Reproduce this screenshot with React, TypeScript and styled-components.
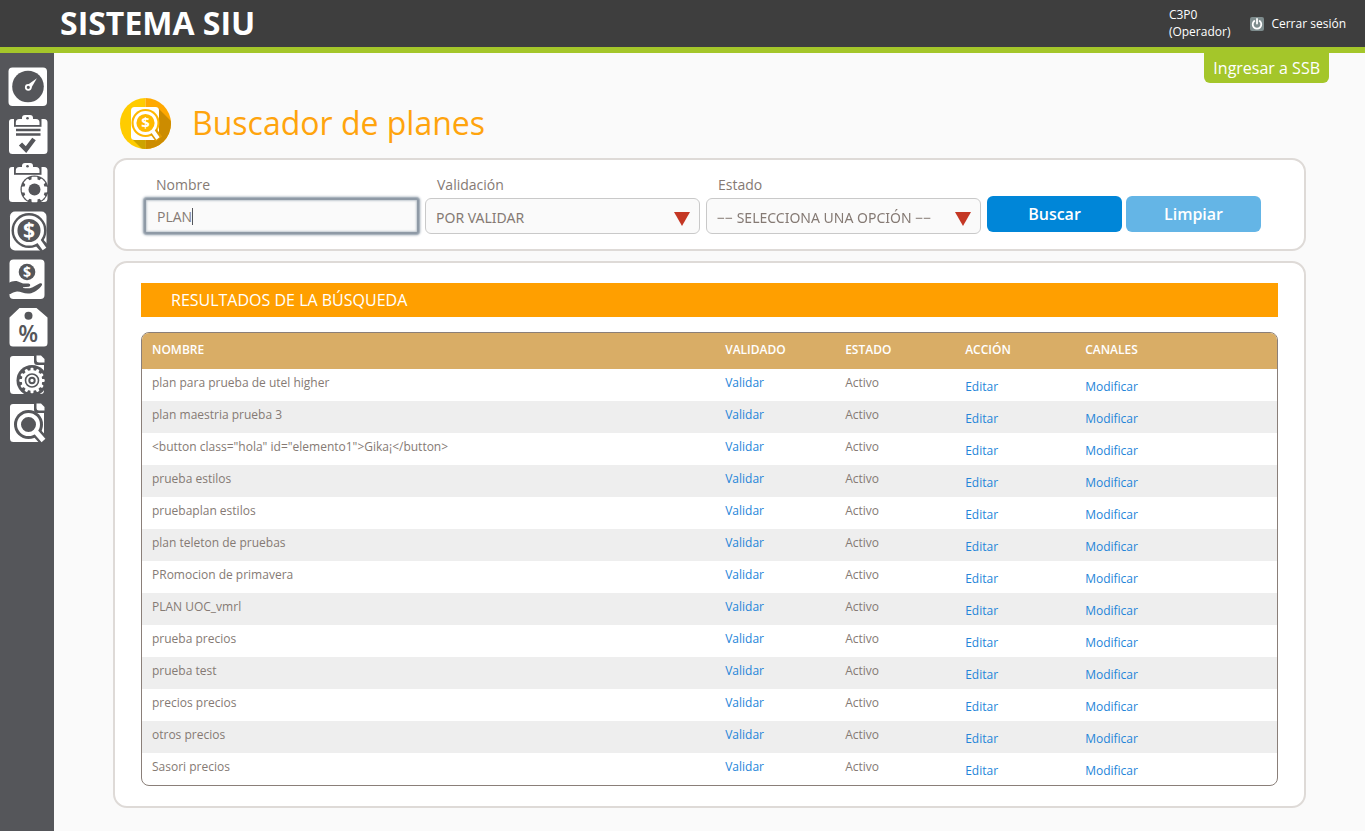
import React, { useState } from "react";
import styled, { createGlobalStyle } from "styled-components";

const GlobalStyle = createGlobalStyle`
  *, *::before, *::after { box-sizing: border-box; }
  html, body, #root { min-height: 100vh; }
  body {
    margin: 0;
    background: #fafafa;
    color: #857a74;
    font-family: "Open Sans", "Noto Sans", sans-serif;
    font-size: 12px;
    line-height: 18px;
  }
  button, input, select { font-family: inherit; }
`;

const Page = styled.div`
  display: flex;
  flex-direction: column;
  min-height: 100vh;
`;

const Header = styled.header`
  display: flex;
  align-items: center;
  justify-content: space-between;
  height: 53px;
  padding: 0 19px 0 60px;
  background: #3e3e3e;
  border-bottom: 6px solid #a4c62a;
  color: #fff;
`;

const Brand = styled.h1`
  margin: 0;
  padding-bottom: 2px;
  font-size: 32px;
  line-height: 44px;
  font-weight: 700;
`;

const Account = styled.div`
  display: flex;
  align-items: center;
  gap: 20px;
  font-weight: 500;
  line-height: 17px;
`;

const UserName = styled.div`
  display: flex;
  flex-direction: column;
  padding-bottom: 2px;
`;

const Logout = styled.a`
  display: flex;
  align-items: center;
  gap: 7px;
  color: #fff;
  text-decoration: none;
`;

const Body = styled.div`
  display: flex;
  flex: 1;
`;

const Sidebar = styled.nav`
  flex: 0 0 54px;
  display: flex;
  flex-direction: column;
  gap: 8px;
  padding: 14px 0 0 8px;
  background: #55565a;
`;

const SideLink = styled.a`
  display: block;
  height: 40px;
  svg { display: block; }
`;

const Main = styled.main`
  flex: 1;
  min-width: 0;
  display: flex;
  flex-direction: column;
  padding: 0 59px 22px;
`;

const SsbLink = styled.a`
  align-self: flex-end;
  margin-right: -23px;
  padding: 3px 9px;
  border-radius: 0 0 6px 6px;
  background: #a4c62a;
  color: #fff;
  font-size: 16px;
  line-height: 24px;
  font-weight: 500;
  text-decoration: none;
`;

const TitleRow = styled.div`
  display: flex;
  align-items: center;
  gap: 20px;
  padding: 14px 0 8px 6px;
`;

const Title = styled.h2`
  margin: 0;
  padding-bottom: 2px;
  color: #ffa40d;
  font-size: 32px;
  line-height: 50px;
  font-weight: 400;
`;

const Card = styled.section`
  border: 2px solid #dedad7;
  border-radius: 14px;
  background: #fff;
`;

const SearchCard = styled(Card)`
  margin-bottom: 10px;
  padding: 16px 29px 15px;
`;

const ResultsCard = styled(Card)`
  padding: 20px 26px;
`;

const SearchForm = styled.form`
  display: flex;
  flex-wrap: wrap;
  align-items: flex-end;
  gap: 6px;
`;

const Field = styled.div`
  flex: 0 1 275px;
  display: flex;
  flex-direction: column;
  gap: 4px;
`;

const Label = styled.label`
  padding-left: 12px;
  font-size: 14px;
  line-height: 18px;
`;

const InputBox = styled.div`
  position: relative;
`;

const Caret = styled.span`
  position: absolute;
  left: 48px;
  top: 10px;
  width: 1px;
  height: 17px;
  background: #55565a;
`;

const TextBox = styled.input<{ $ownCaret: boolean }>`
  display: block;
  width: 100%;
  height: 36px;
  padding: 0 11px;
  border: 1px solid #c9c9c9;
  border-radius: 6px;
  background: #fafafa;
  color: #857a74;
  caret-color: ${(p) => (p.$ownCaret ? "auto" : "transparent")};
  font-size: 14px;
  font-weight: 500;
  outline: none;
  &:focus {
    border: 2px solid #8f9aa6;
    border-radius: 3px;
    box-shadow: 0 0 0 1px #a9b3bd, 0 0 2px 2px #ccd2d8, inset 0 0 2px 1px #c3cad1;
  }
`;

const SelectBox = styled.div`
  position: relative;
  &::after {
    content: "";
    position: absolute;
    right: 10px;
    top: 14px;
    border: 8px solid transparent;
    border-top: 14px solid #c43724;
    border-bottom: 0;
    pointer-events: none;
  }
`;

const Select = styled.select`
  appearance: none;
  display: block;
  width: 100%;
  height: 36px;
  padding: 2px 32px 0 10px;
  border: 1px solid #c9c9c9;
  border-radius: 6px;
  background: #fafafa;
  color: #857a74;
  font-family: "Noto Sans", "Open Sans", sans-serif;
  font-size: 14px;
`;

const Actions = styled.div`
  display: flex;
  gap: 4px;
  padding-bottom: 2px;
`;

const Button = styled.button<{ $light?: boolean }>`
  width: 135px;
  height: 36px;
  padding: 0;
  border: 0;
  border-radius: 6px;
  background: ${(p) => (p.$light ? "#64b5e6" : "#0086d8")};
  color: #fff;
  font-size: 16px;
  font-weight: 600;
`;

const ResultsTitle = styled.h3`
  margin: 0 0 15px;
  padding: 0 30px;
  background: #ff9f00;
  color: #fff;
  font-size: 16px;
  line-height: 34px;
  font-weight: 500;
`;

const TableFrame = styled.div`
  overflow: hidden;
  border: 1px solid #8a7f79;
  border-radius: 8px;
`;

const Table = styled.table`
  width: 100%;
  table-layout: fixed;
  border-collapse: collapse;
`;

const HeadCell = styled.th<{ $width?: string }>`
  width: ${(p) => p.$width ?? "auto"};
  height: 36px;
  padding: 0 10px 2px;
  background: #d9ad66;
  color: #fff;
  font-weight: 600;
  text-align: left;
`;

const Row = styled.tr`
  &:nth-child(even) { background: #eee; }
`;

const Cell = styled.td<{ $low?: boolean }>`
  height: 32px;
  padding: ${(p) => (p.$low ? "9px 10px 5px" : "5px 10px 9px")};
`;

const TableLink = styled.a`
  color: #2585d9;
  text-decoration: none;
`;

const DARK = "#55565a";

function Glyph({ children }: { children: React.ReactNode }) {
  return (
    <svg width="40" height="46" viewBox="0 0 40 46" aria-hidden="true">
      {children}
    </svg>
  );
}

function Cog({ cx, cy, r, teeth, tooth, color }: { cx: number; cy: number; r: number; teeth: number; tooth: number; color: string }) {
  return (
    <g fill={color} transform={`translate(${cx} ${cy})`}>
      <circle r={r} />
      {Array.from({ length: teeth }, (_, i) => (
        <rect key={i} x={-tooth / 2} y={-r - 2.2} width={tooth} height={5} rx="1" transform={`rotate(${(360 / teeth) * i})`} />
      ))}
    </g>
  );
}

const clipboard = (
  <>
    <path fill="#fff" d="M4 4H36a3.5 3.5 0 0 1 3.5 3.5V35.5a3.5 3.5 0 0 1-3.5 3.5H4.500a3.500 3.500 0 0 1-3.500-3.500V7A3 3 0 0 1 4 4z" />
    <path fill={DARK} d="M6 11.800V3H33.500v8.800z" />
    <path fill="#fff" d="M7.800 10V7.500A3.500 3.500 0 0 1 11.300 4H14V3a3 3 0 0 1 3-3h5a3 3 0 0 1 3 3v1h3a3.500 3.500 0 0 1 3.500 3.500V10z" />
    <circle cx="19.500" cy="3.200" r="1.300" fill={DARK} />
  </>
);

const sheet = (
  <>
    <path fill="#fff" d="M5 1H26v5.500a3.500 3.500 0 0 0 3.500 3.500H36v25.500a3.500 3.500 0 0 1-3.500 3.500H5.500A3.500 3.500 0 0 1 2 35.500V4a3 3 0 0 1 3-3z" />
    <path fill="#fff" d="M28.500 0.500h4.500L36.500 4V7.500H31A2.500 2.500 0 0 1 28.500 5z" />
  </>
);

const GaugeIcon = () => (
  <Glyph>
    <rect x="0.500" y="0.500" width="38.500" height="38.500" rx="4" fill="#fff" />
    <circle cx="20" cy="19.500" r="15.800" fill={DARK} />
    <path fill="#fff" d="M19.800 17.800 28.900 11.200 23.200 21z" />
    <circle cx="20.300" cy="20.300" r="2.500" fill={DARK} stroke="#fff" strokeWidth="1.800" />
  </Glyph>
);

const ChecklistIcon = () => (
  <Glyph>
    {clipboard}
    <path stroke={DARK} strokeWidth="2.400" d="M8 15H32.500M8 19.500H32.500" />
    <path stroke={DARK} strokeWidth="4.500" fill="none" d="m12.500 29 5.500 5.500L26 24" />
  </Glyph>
);

const ClipboardGearIcon = () => (
  <Glyph>
    {clipboard}
    <circle cx="26.500" cy="26.500" r="14" fill={DARK} />
    <Cog cx={26.500} cy={26.500} r={10.500} teeth={8} tooth={6} color="#fff" />
    <circle cx="26.500" cy="26.500" r="6" fill={DARK} />
  </Glyph>
);

const PlanSearchIcon = () => (
  <Glyph>
    <rect x="2" y="0.500" width="36.500" height="39" rx="5" fill="#fff" />
    <circle cx="21" cy="19.500" r="17.500" fill={DARK} />
    <path stroke={DARK} strokeWidth="10" d="m29 29 9 10" />
    <path stroke="#fff" strokeWidth="4.500" d="m30 29 6.500 9" />
    <circle cx="21" cy="19.500" r="13.300" fill={DARK} stroke="#fff" strokeWidth="3.500" />
    <text x="21" y="27" textAnchor="middle" fontSize="21" fontWeight="700" fill="#fff">$</text>
  </Glyph>
);

const PaymentIcon = () => (
  <Glyph>
    <rect x="1.500" y="0.500" width="35" height="39.500" rx="4" fill="#fff" />
    <circle cx="19" cy="13" r="8.300" fill={DARK} />
    <text x="19" y="18" textAnchor="middle" fontSize="14" fontWeight="700" fill="#fff">$</text>
    <path fill={DARK} d="M0 24.500C4 22 7 21.500 10 22.500l5 2h5.500c2 0 2.500 3 .3 3.200L15 28.200l.2.900c4 .4 7 .3 9-.6L31.500 24.500c1.500-.6 3 .1 2.500 1.500-3 4.500-8 8-12.500 8.500-5 .7-9-2.200-12.500-2C6 33 4 34 2.500 35H0z" />
  </Glyph>
);

const DiscountIcon = () => (
  <Glyph>
    <path fill="#fff" d="M11.500 1h17L39.500 10.500V36a3.500 3.500 0 0 1-3.500 3.500H5A3.500 3.500 0 0 1 1.500 36V10.500z" />
    <circle cx="20.500" cy="8.700" r="4" fill={DARK} />
    <text x="20.300" y="34.500" textAnchor="middle" fontSize="23" fontWeight="600" fill={DARK}>%</text>
  </Glyph>
);

const FileGearIcon = () => (
  <Glyph>
    {sheet}
    <circle cx="24" cy="25.500" r="15.500" fill={DARK} />
    <Cog cx={24} cy={25.500} r={10.500} teeth={12} tooth={3} color="#fff" />
    <circle cx="24" cy="25.500" r="6.500" fill="#fff" stroke={DARK} strokeWidth="1.600" />
    <circle cx="24" cy="25.500" r="2.700" fill="#fff" stroke={DARK} strokeWidth="2" />
  </Glyph>
);

const FileSearchIcon = () => (
  <Glyph>
    {sheet}
    <circle cx="20.500" cy="21.500" r="14.500" fill={DARK} />
    <path stroke={DARK} strokeWidth="10" d="m28 29 9 10" />
    <path stroke="#fff" strokeWidth="5" d="m28 29 7.500 8.500" />
    <circle cx="20.500" cy="21.500" r="9.500" fill={DARK} stroke="#fff" strokeWidth="4" />
  </Glyph>
);

const PowerIcon = () => (
  <svg width="14" height="14" viewBox="0 0 14 14" aria-hidden="true">
    <rect width="14" height="14" rx="2" fill="#7e8c8d" />
    <path fill="none" stroke="#fff" strokeWidth="1.800" strokeLinecap="round" d="M4.300 4a4.300 4.300 0 1 0 5.400 0M7 2v4.500" />
  </svg>
);

const TitleIcon = () => (
  <svg width="53" height="53" viewBox="0 0 53 53" aria-hidden="true">
    <defs>
      <clipPath id="disc"><circle cx="26.500" cy="26.500" r="25.500" /></clipPath>
    </defs>
    <g clipPath="url(#disc)">
      <path fill="#ffcc00" d="M0 0h26.500v53H0z" />
      <path fill="#ffa800" d="M26.500 0H53v53H26.500z" />
      <path fill="#cc8c00" d="M39 11 53 25v28H26.500V43H39z" />
      <path fill="#cca300" d="M13 42h13.500v11H24z" />
    </g>
    <rect x="12" y="10" width="28" height="33" rx="3.500" fill="#fff" />
    <circle cx="26.500" cy="26" r="14" fill="#ffb700" />
    <path stroke="#e09a00" strokeWidth="8" d="m34 34 6 8" />
    <path stroke="#fff" strokeWidth="4" d="m33 33 6 8.500" />
    <circle cx="26.500" cy="26" r="10.500" fill="#ffb900" stroke="#fff" strokeWidth="2.800" />
    <text x="26.500" y="31" textAnchor="middle" fontSize="15" fontWeight="700" fill="#fff">$</text>
  </svg>
);

const sections = [
  { name: "Tablero", Icon: GaugeIcon },
  { name: "Validaciones", Icon: ChecklistIcon },
  { name: "Procesos", Icon: ClipboardGearIcon },
  { name: "Planes", Icon: PlanSearchIcon },
  { name: "Pagos", Icon: PaymentIcon },
  { name: "Descuentos", Icon: DiscountIcon },
  { name: "Configuración", Icon: FileGearIcon },
  { name: "Consultas", Icon: FileSearchIcon },
];

const plans = [
  "plan para prueba de utel higher",
  "plan maestria prueba 3",
  '<button class="hola" id="elemento1">Gika¡</button>',
  "prueba estilos",
  "pruebaplan estilos",
  "plan teleton de pruebas",
  "PRomocion de primavera",
  "PLAN UOC_vmrl",
  "prueba precios",
  "prueba test",
  "precios precios",
  "otros precios",
  "Sasori precios",
];

export default function App() {
  const [name, setName] = useState("PLAN");
  const [edited, setEdited] = useState(false);
  const changeName = (value: string) => {
    setName(value);
    setEdited(true);
  };
  return (
    <Page>
      <GlobalStyle />
      <Header>
        <Brand>SISTEMA SIU</Brand>
        <Account>
          <UserName>
            <span>C3P0</span>
            <span>(Operador)</span>
          </UserName>
          <Logout href="#salir">
            <PowerIcon />
            Cerrar sesión
          </Logout>
        </Account>
      </Header>
      <Body>
        <Sidebar aria-label="Secciones">
          {sections.map(({ name: section, Icon }) => (
            <SideLink key={section} href="#seccion" aria-label={section}>
              <Icon />
            </SideLink>
          ))}
        </Sidebar>
        <Main>
          <SsbLink href="#ssb">Ingresar a SSB</SsbLink>
          <TitleRow>
            <TitleIcon />
            <Title>Buscador de planes</Title>
          </TitleRow>
          <SearchCard>
            <SearchForm onSubmit={(e) => e.preventDefault()}>
              <Field>
                <Label htmlFor="nombre">Nombre</Label>
                <InputBox>
                  <TextBox
                    id="nombre"
                    autoFocus
                    $ownCaret={edited}
                    value={name}
                    onChange={(e) => changeName(e.target.value)}
                  />
                  {!edited && <Caret />}
                </InputBox>
              </Field>
              <Field>
                <Label htmlFor="validacion">Validación</Label>
                <SelectBox>
                  <Select id="validacion">
                    <option>POR VALIDAR</option>
                  </Select>
                </SelectBox>
              </Field>
              <Field>
                <Label htmlFor="estado">Estado</Label>
                <SelectBox>
                  <Select id="estado">
                    <option>−− SELECCIONA UNA OPCIÓN −−</option>
                  </Select>
                </SelectBox>
              </Field>
              <Actions>
                <Button type="submit">Buscar</Button>
                <Button type="button" $light onClick={() => changeName("")}>Limpiar</Button>
              </Actions>
            </SearchForm>
          </SearchCard>
          <ResultsCard>
            <ResultsTitle>RESULTADOS DE LA BÚSQUEDA</ResultsTitle>
            <TableFrame>
              <Table>
                <thead>
                  <tr>
                    <HeadCell $width="50.5%">NOMBRE</HeadCell>
                    <HeadCell $width="120px">VALIDADO</HeadCell>
                    <HeadCell $width="120px">ESTADO</HeadCell>
                    <HeadCell $width="120px">ACCIÓN</HeadCell>
                    <HeadCell>CANALES</HeadCell>
                  </tr>
                </thead>
                <tbody>
                  {plans.map((plan) => (
                    <Row key={plan}>
                      <Cell>{plan}</Cell>
                      <Cell><TableLink href="#validar">Validar</TableLink></Cell>
                      <Cell>Activo</Cell>
                      <Cell $low><TableLink href="#editar">Editar</TableLink></Cell>
                      <Cell $low><TableLink href="#modificar">Modificar</TableLink></Cell>
                    </Row>
                  ))}
                </tbody>
              </Table>
            </TableFrame>
          </ResultsCard>
        </Main>
      </Body>
    </Page>
  );
}
